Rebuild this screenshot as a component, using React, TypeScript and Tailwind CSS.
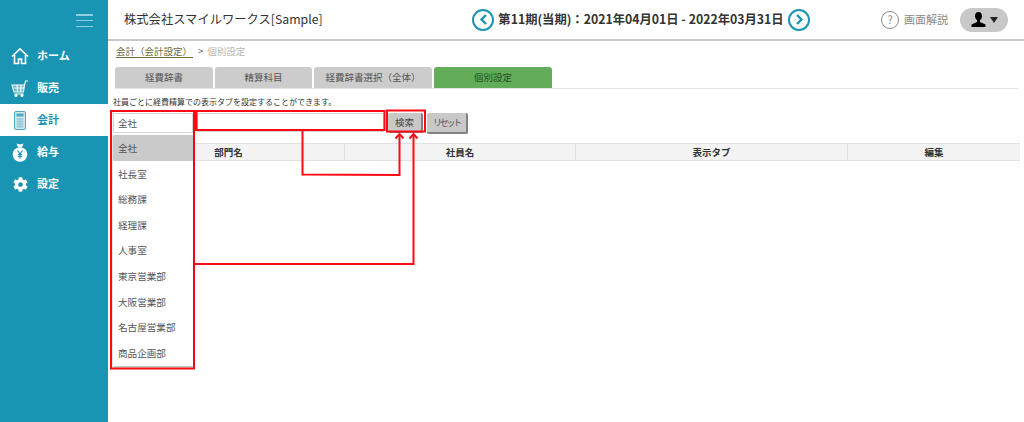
import { FaCog } from "react-icons/fa";

const font = { fontFamily: '"Noto Sans CJK JP", "Noto Sans", sans-serif' };

const NavIcon: React.FC<{ name: string }> = ({ name }) => {
  if (name === "home") {
    return (
      <svg width="18" height="18" viewBox="0 0 18 18" fill="none" stroke="#fff" strokeWidth="1.6">
        <path d="M1 9.500 9 1.800l8 7.700" />
        <path d="M3.500 8v8.500h4V12h3v4.500h4V8" />
      </svg>
    );
  }
  if (name === "cart") {
    return (
      <svg width="18" height="18" viewBox="0 0 18 18" fill="none" stroke="#fff" strokeWidth="1.100">
        <path d="M1 6h12.500l-1 7H3z" fill="#ffffff55" />
        <path d="M13.500 6 14.500 2H17" />
        <path d="M3.500 9h9.500M6 6l.5 7M10 6l-.3 7M3.500 15h9" />
        <circle cx="5" cy="16.500" r="1" fill="#fff" />
        <circle cx="11" cy="16.500" r="1" fill="#fff" />
      </svg>
    );
  }
  if (name === "calc") {
    return (
      <svg width="12" height="19" viewBox="0 0 12 19">
        <rect x="0.500" y="0.500" width="11" height="18" rx="1.500" fill="#cfe8ef" stroke="#4fa9c2" />
        <rect x="2.500" y="2.500" width="7" height="3" fill="#4fa9c2" />
        <path d="M2.500 8h7M2.500 10.500h7M2.500 13h7M2.500 15.500h7M4 7v10M6 7v10M8 7v10" stroke="#8cc4d5" strokeWidth="0.900" />
      </svg>
    );
  }
  if (name === "money") {
    return (
      <svg width="16" height="20" viewBox="0 0 16 20">
        <path d="M4.500 1.500 8 2.500l3.500-1L10 5.200H6z" fill="#fff" />
        <circle cx="8" cy="12.500" r="7.300" fill="#fff" />
        <path d="M5.500 8.500 8 12l2.500-3.500M8 12v4.500M5.800 12.500h4.400M5.800 14.300h4.400" stroke="#1a94b3" strokeWidth="1.200" fill="none" />
      </svg>
    );
  }
  return <FaCog className="text-white" size={15} />;
};

const navItems = [
  { label: "ホーム", icon: "home" },
  { label: "販売", icon: "cart" },
  { label: "会計", icon: "calc", active: true },
  { label: "給与", icon: "money" },
  { label: "設定", icon: "gear" },
];

const tabs = [
  { label: "経費辞書", w: "w-[98px]" },
  { label: "精算科目", w: "w-[97px]" },
  { label: "経費辞書選択（全体）", w: "w-[118px]" },
  { label: "個別設定", w: "w-[118px]", active: true },
];

const departments = ["社長室", "総務課", "経理課", "人事室", "東京営業部", "大阪営業部", "名古屋営業部", "商品企画部"];

const columns = [
  { label: "部門名", w: "w-[232px]" },
  { label: "社員名", w: "w-[231px]" },
  { label: "表示タブ", w: "w-[272px]" },
  { label: "編集", w: "flex-1" },
];

const Arrows: React.FC = () => (
  <svg className="absolute left-0 top-0 pointer-events-none" width="1024" height="422" fill="none" stroke="#ff0a14" strokeWidth="2">
    <rect x="111" y="111" width="83" height="257.500" />
    <rect x="196" y="111" width="188.500" height="19" />
    <rect x="387" y="110.500" width="38" height="21" />
    <path d="M196 112v18" strokeWidth="3" />
    <path d="M302.500 131v43.500l97 .5v-41" />
    <path d="M395.500 138.500l4-4.500 4 4.500" />
    <path d="M195 264h218.500v-130" />
    <path d="M409.500 138.500l4-4.500 4 4.500" />
  </svg>
);

const App: React.FC = () => {
  return (
    <div className="relative flex w-[1024px] h-[422px] overflow-hidden bg-white text-[#333]" style={font}>
      {/* Sidebar */}
      <aside className="w-[108px] shrink-0 bg-[#1a94b3]">
        <div className="h-[40px] flex justify-end pr-[15px] pt-[14px]">
          <div className="w-[17px] h-[13px] flex flex-col justify-between">
            <div className="h-[1.500px] bg-[#8fcfdf]" />
            <div className="h-[1.500px] bg-[#8fcfdf]" />
            <div className="h-[1.500px] bg-[#8fcfdf]" />
          </div>
        </div>
        {navItems.map((item) => (
          <div
            key={item.label}
            className={`h-[32px] flex items-center text-[11px] font-bold ${item.active ? "bg-white text-[#1a94b3]" : "text-white"}`}
          >
            <div className="w-[37px] pl-[3px] flex justify-center">
              <NavIcon name={item.icon} />
            </div>
            <span className="pb-[2px]">{item.label}</span>
          </div>
        ))}
      </aside>

      <main className="flex-1 flex flex-col min-w-0">
        {/* Header */}
        <header className="h-[41px] shrink-0 border-b-2 border-[#c8c8c8] flex items-center">
          <div className="w-[335px] pl-[16px] text-[12.300px] text-[#333]">株式会社スマイルワークス[Sample]</div>
          <div className="flex items-center ml-[29px]">
            <div className="w-[22px] h-[22px] rounded-full border-2 border-[#1a94b3] flex items-center justify-center">
              <svg width="9" height="11" viewBox="0 0 9 11" fill="none" stroke="#1a94b3" strokeWidth="2.400">
                <path d="M7 1 2.500 5.500 7 10" />
              </svg>
            </div>
            <div className="w-[294px] text-[12.300px] font-bold text-[#333] whitespace-nowrap text-center">第11期(当期)：2021年04月01日 - 2022年03月31日</div>
            <div className="w-[22px] h-[22px] rounded-full border-2 border-[#1a94b3] flex items-center justify-center">
              <svg width="9" height="11" viewBox="0 0 9 11" fill="none" stroke="#1a94b3" strokeWidth="2.400">
                <path d="M2 1l4.500 4.500L2 10" />
              </svg>
            </div>
          </div>
          <div className="ml-[71px] w-[18px] h-[18px] rounded-full border-[1.500px] border-[#8a8a8a] flex items-center justify-center text-[11px] text-[#8a8a8a]">?</div>
          <div className="ml-[5px] text-[11px] text-[#8a8a8a] whitespace-nowrap">画面解説</div>
          <div className="ml-[12px] w-[48px] h-[24px] rounded-full bg-[#c8c8c8] flex items-center justify-center gap-[4px]">
            <svg width="15" height="15" viewBox="0 0 15 15">
              <path d="M7.500 0C10 0 11 1.800 11 4c0 2-1 3.500-2 4.300V10l5.500 2.500V15H.5v-2.500L6 10V8.300C5 7.500 4 6 4 4c0-2.200 1-4 3.500-4z" fill="#000" />
            </svg>
            <svg width="8" height="6" viewBox="0 0 8 6">
              <path d="M0 0h8L4 6z" fill="#222" />
            </svg>
          </div>
        </header>

        {/* Breadcrumb */}
        <div className="h-[26px] shrink-0 pl-[8px] pt-[4px] flex items-start text-[9.500px] leading-[12px]">
          <span className="text-[#6b6b3a] border-b border-[#6b6b3a] pr-[1px]">会計（会計設定）</span>
          <span className="ml-[5px] text-[#555]">&gt;</span>
          <span className="ml-[4px] text-[#b5b5b5]">個別設定</span>
        </div>

        {/* Tabs */}
        <div className="ml-[7px] mr-[6px] h-[22px] shrink-0 flex gap-[2px] border-b border-[#e4e4e4]">
          {tabs.map((tab) => (
            <div
              key={tab.label}
              className={`${tab.w} h-[21px] rounded-t-[3px] flex items-center justify-center text-[9.500px] ${tab.active ? "bg-[#63ac59] text-[#24511f]" : "bg-[#cccccc] text-[#555]"}`}
            >
              {tab.label}
            </div>
          ))}
        </div>

        <div className="pl-[5px] mt-[6px] h-[14px] text-[8px] leading-[14px] text-[#333] whitespace-nowrap">社員ごとに経費精算での表示タブを設定することができます。</div>

        {/* Search row */}
        <div className="relative mt-[4px] ml-[5px] h-[20px] flex items-start">
          <div className="w-[80px] h-[20px] bg-white border border-[#d5d5d5] pl-[4px] text-[9.500px] leading-[18px] text-[#555]">全社</div>
          <div className="ml-[4px] w-[187px] h-[19px] bg-white border border-[#d5d5d5]" />
          <button className="ml-[4px] w-[35px] h-[20px] bg-[#c8c8c8] border-r-2 border-b-2 border-[#808080] rounded-[2px] text-[9.500px] text-[#444]">検索</button>
          <button className="ml-[4px] w-[41px] h-[21px] bg-[#c8c8c8] border-r-2 border-b-2 border-[#808080] rounded-[2px] text-[9px] tracking-[-2.300px] text-[#555] whitespace-nowrap">リセット</button>

          {/* Dropdown list */}
          <div className="absolute left-0 top-[22px] w-[80px] bg-white shadow-[0_1px_2px_rgba(0,0,0,0.35)] text-[9.600px] text-[#555] z-10">
            <div className="h-[26px] pl-[5px] flex items-center bg-[#cacaca]">全社</div>
            {departments.map((name) => (
              <div key={name} className="h-[25.600px] pl-[5px] flex items-center">
                {name}
              </div>
            ))}
          </div>
        </div>

        {/* Table header */}
        <div className="mt-[10px] ml-[5px] mr-[4px] h-[18px] flex bg-[#f3f3f3] border-y border-[#e2e2e2] text-[9.500px] font-bold text-[#333]">
          {columns.map((col, i) => (
            <div key={col.label} className={`${col.w} flex items-center justify-center ${i < 3 ? "border-r border-[#dcdcdc]" : ""}`}>
              {col.label}
            </div>
          ))}
        </div>
      </main>

      <Arrows />
    </div>
  );
};

export default App;
